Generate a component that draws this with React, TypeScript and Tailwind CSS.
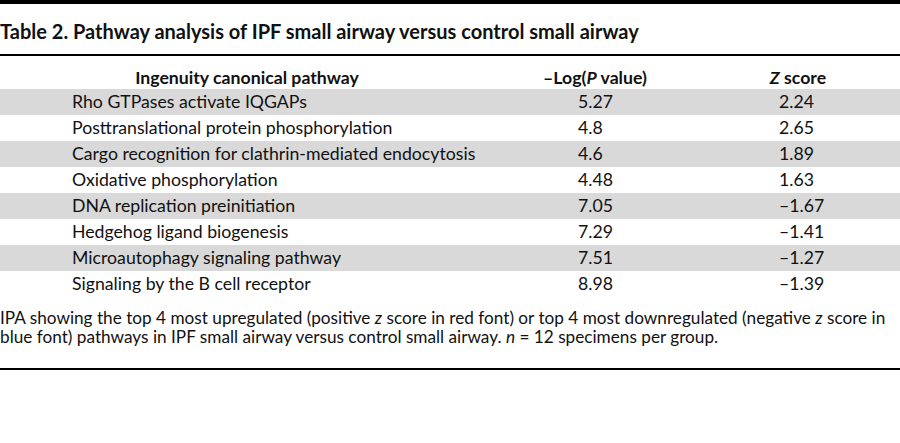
const rows: [string, string, string][] = [
  ["Rho GTPases activate IQGAPs", "5.27", "2.24"],
  ["Posttranslational protein phosphorylation", "4.8", "2.65"],
  ["Cargo recognition for clathrin-mediated endocytosis", "4.6", "1.89"],
  ["Oxidative phosphorylation", "4.48", "1.63"],
  ["DNA replication preinitiation", "7.05", "–1.67"],
  ["Hedgehog ligand biogenesis", "7.29", "–1.41"],
  ["Microautophagy signaling pathway", "7.51", "–1.27"],
  ["Signaling by the B cell receptor", "8.98", "–1.39"],
];

export default function App() {
  return (
    <div className="w-[900px] h-[443px] bg-white text-[#111] font-['Lato',sans-serif] overflow-hidden">
      <div className="h-[4px] bg-black" />
      <h2 className="pt-[15px] pb-[11px] leading-[24px] text-[20px] font-bold whitespace-nowrap">
        Table 2. Pathway analysis of IPF small airway versus control small airway
      </h2>
      <div className="h-[2px] bg-black" />

      <div className="grid grid-cols-[494px_202px_204px] pt-[12px] pb-[1px] text-[17.7px] font-bold leading-[20px]">
        <div className="text-center">Ingenuity canonical pathway</div>
        <div className="text-center">
          –Log(<i>P</i> value)
        </div>
        <div className="text-center">
          <i>Z</i> score
        </div>
      </div>

      <div className="flex flex-col">
        {rows.map(([name, logp, z], i) => (
          <div
            key={name}
            className={`grid grid-cols-[494px_202px_204px] h-[26px] items-center text-[17.7px] leading-[20px] ${
              i % 2 === 0 ? "bg-[#d9d9d9]" : "bg-white"
            }`}
          >
            <div className="pl-[72px] whitespace-nowrap">{name}</div>
            <div className="pl-[84px]">{logp}</div>
            <div className="pl-[83px]">{z}</div>
          </div>
        ))}
      </div>

      <div className="pt-[11px] text-[17.2px] leading-[19px]">
        <p className="whitespace-nowrap">
          IPA showing the top 4 most upregulated (positive <i>z</i> score in red font) or top 4 most downregulated
          (negative <i>z</i> score in
        </p>
        <p className="whitespace-nowrap">
          blue font) pathways in IPF small airway versus control small airway. <i>n</i> = 12 specimens per group.
        </p>
      </div>
      <div className="mt-[22px] h-[2px] bg-black" />
    </div>
  );
}
